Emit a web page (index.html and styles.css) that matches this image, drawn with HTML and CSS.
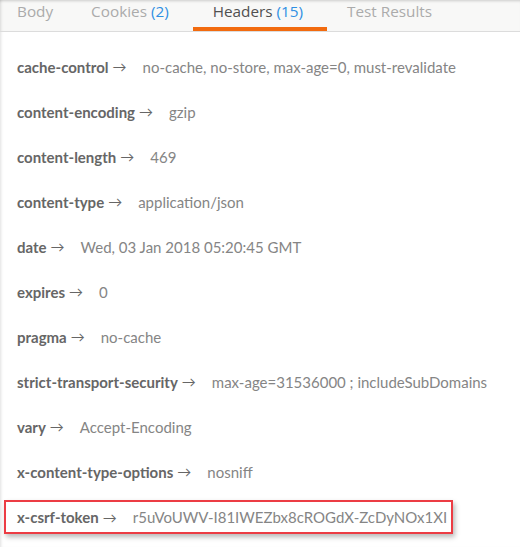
FILE: index.html
```html
<!DOCTYPE html>
<html>
<head>
<meta charset="utf-8">
<link rel="stylesheet" href="styles.css">
</head>
<body>
<div class="page">
  <div class="tabs">
    <div class="tab tab-body">Body</div>
    <div class="tab tab-cookies">Cookies <span class="count">(2)</span></div>
    <div class="tab tab-headers active">Headers <span class="count">(15)</span></div>
    <div class="tab tab-tests">Test Results</div>
  </div>
  <div class="headers">
    <div class="row"><span class="key">cache-control</span><span class="arrow">→</span><span class="val">no-cache, no-store, max-age=0, must-revalidate</span></div>
    <div class="row"><span class="key">content-encoding</span><span class="arrow">→</span><span class="val">gzip</span></div>
    <div class="row"><span class="key">content-length</span><span class="arrow">→</span><span class="val">469</span></div>
    <div class="row"><span class="key">content-type</span><span class="arrow">→</span><span class="val">application/json</span></div>
    <div class="row"><span class="key">date</span><span class="arrow">→</span><span class="val">Wed, 03 Jan 2018 05:20:45 GMT</span></div>
    <div class="row"><span class="key">expires</span><span class="arrow">→</span><span class="val">0</span></div>
    <div class="row"><span class="key">pragma</span><span class="arrow">→</span><span class="val">no-cache</span></div>
    <div class="row"><span class="key">strict-transport-security</span><span class="arrow">→</span><span class="val">max-age=31536000 ; includeSubDomains</span></div>
    <div class="row"><span class="key">vary</span><span class="arrow">→</span><span class="val">Accept-Encoding</span></div>
    <div class="row"><span class="key">x-content-type-options</span><span class="arrow">→</span><span class="val">nosniff</span></div>
    <div class="row row-hl"><div class="hl"><span class="key">x-csrf-token</span><span class="arrow">→</span><span class="val">r5uVoUWV-I81IWEZbx8cROGdX-ZcDyNOx1XI</span></div></div>
  </div>
</div>
</body>
</html>
```
FILE: styles.css
```css
html, body {
  margin: 0;
  padding: 0;
  background: #ffffff;
}
.page {
  width: 520px;
  height: 547px;
  overflow: hidden;
  font-family: Lato, "Open Sans", sans-serif;
  box-shadow: inset 3px 0 3px -2px rgba(0,0,0,0.12);
}
.tabs {
  display: flex;
  height: 31px;
  background: #f8f8f7;
  border-bottom: 1px solid #dcdcdc;
  box-shadow: inset 0 3px 3px -2px rgba(0,0,0,0.18), inset 3px 0 3px -2px rgba(0,0,0,0.12);
  font-family: "Open Sans", sans-serif;
  font-size: 15.3px;
  color: #ababab;
  line-height: 22px;
}
.tab {
  position: relative;
  height: 31px;
  box-sizing: border-box;
}
.tab-body { margin-left: 17px; }
.tab-cookies { margin-left: 38px; }
.tab-headers {
  margin-left: 24px;
  padding: 0 24px 0 20px;
  color: #505050;
  border-bottom: 4px solid #f26b0f;
}
.tab-tests { margin-left: 20px; }
.count { color: #2e8fe3; }
.headers {
  padding-top: 12px;
}
.row {
  display: flex;
  align-items: center;
  height: 45px;
  padding-left: 17px;
  font-size: 15px;
  white-space: nowrap;
}
.key {
  font-weight: 700;
  color: #666666;
}
.arrow {
  color: #666666;
  margin-left: 4px;
  font-size: 14px;
}
.val {
  color: #858585;
  margin-left: 16px;
}
.row-hl {
  padding-left: 4px;
}
.hl {
  display: flex;
  align-items: center;
  box-sizing: border-box;
  width: 449px;
  height: 34px;
  margin-top: 1px;
  padding-left: 11px;
  border: 2px solid #ec3c44;
  box-shadow: 2px 3px 5px rgba(0,0,0,0.28);
}
```
